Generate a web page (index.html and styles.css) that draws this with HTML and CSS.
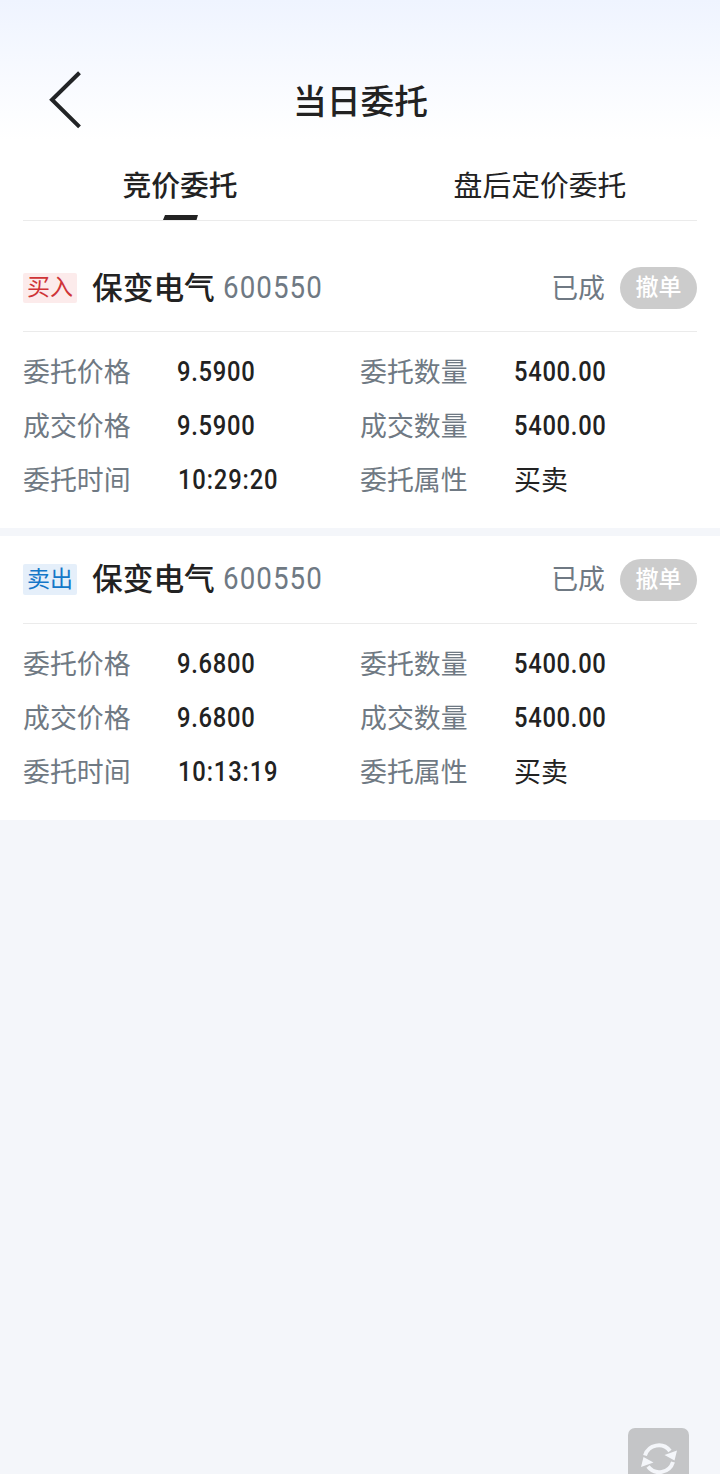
FILE: index.html
```html
<!DOCTYPE html>
<html lang="zh-CN">
<head>
<meta charset="utf-8">
<title>当日委托</title>
<link rel="stylesheet" href="styles.css">
</head>
<body>
<div class="screen">
  <header class="top">
    <div class="navbar">
      <svg class="back" width="36" height="60" viewBox="0 0 36 60"><path d="M32.5 2.8 5 29.7 32.5 56.8" fill="none" stroke="#222426" stroke-width="4"/></svg>
      <h1 class="title">当日委托</h1>
    </div>
    <nav class="tabs">
      <a class="tab tab-active">竞价委托<svg class="indicator" width="35" height="5" viewBox="0 0 35 5"><path d="M2 0H35L33.5 5H0Z" fill="#222"/></svg></a>
      <a class="tab">盘后定价委托</a>
    </nav>
  </header>
  <main class="orders">
    <section class="order">
      <div class="order-head">
        <span class="tag buy">买入</span><span class="name">保变电气</span><span class="code">600550</span>
        <span class="status">已成</span><button class="cancel">撤单</button>
      </div>
      <div class="details">
        <span class="label">委托价格</span><span class="num">9.5900</span><span class="label">委托数量</span><span class="num">5400.00</span>
        <span class="label">成交价格</span><span class="num">9.5900</span><span class="label">成交数量</span><span class="num">5400.00</span>
        <span class="label">委托时间</span><span class="num time">10:29:20</span><span class="label">委托属性</span><span class="kind">买卖</span>
      </div>
    </section>
    <section class="order">
      <div class="order-head">
        <span class="tag sell">卖出</span><span class="name">保变电气</span><span class="code">600550</span>
        <span class="status">已成</span><button class="cancel">撤单</button>
      </div>
      <div class="details">
        <span class="label">委托价格</span><span class="num">9.6800</span><span class="label">委托数量</span><span class="num">5400.00</span>
        <span class="label">成交价格</span><span class="num">9.6800</span><span class="label">成交数量</span><span class="num">5400.00</span>
        <span class="label">委托时间</span><span class="num time">10:13:19</span><span class="label">委托属性</span><span class="kind">买卖</span>
      </div>
    </section>
  </main>
  <button class="refresh">
    <svg width="38" height="38" viewBox="0 0 38 38"><g fill="none" stroke="#f4f6fa" stroke-width="4"><path d="M5 15.500A14.300 14.300 0 0 1 30 11"/><path d="M33 22A14.300 14.300 0 0 1 8 26.500"/></g><path d="M24.500 15 37 10.500 34.500 20.500ZM13.500 22.500 1 27 3.500 17Z" fill="#f4f6fa"/></svg>
  </button>
</div>
</body>
</html>
```

FILE: styles.css
```css
* { box-sizing: border-box; }
body {
  margin: 0;
  background: #f4f6fa;
  color: #222;
  font-family: "Noto Sans CJK SC", sans-serif;
}
.screen {
  position: relative;
  height: 1474px;
  overflow: hidden;
}
.top {
  height: 244px;
  padding: 62px 0 0;
  background: linear-gradient(#eff4ff 0, #fff 140px);
}
.navbar {
  display: grid;
  grid-template-columns: 120px 1fr 120px;
  align-items: center;
  height: 76px;
}
.back { margin-left: 47px; }
.title {
  margin: 0;
  padding-left: 1px;
  text-align: center;
  font-size: 33.8px;
  font-weight: 500;
  line-height: 76px;
}
.tabs {
  display: flex;
  height: 83px;
  background: linear-gradient(#ebebeb, #ebebeb) 23px 82px / 674px 1px no-repeat;
}
.tab {
  position: relative;
  flex: 1;
  padding-top: 21px;
  text-align: center;
  font-size: 28.8px;
  line-height: 50px;
}
.tab-active { font-weight: 500; }
.indicator {
  position: absolute;
  left: 163px;
  bottom: 1px;
}
.orders {
  display: flex;
  flex-direction: column;
  gap: 8px;
}
.order {
  height: 284px;
  padding: 0 23px;
  background: #fff;
}
.order-head {
  display: flex;
  align-items: center;
  height: 88px;
  border-bottom: 1px solid #ebebeb;
}
.tag {
  width: 54px;
  height: 30px;
  margin-top: 1px;
  border-radius: 2px;
  text-align: center;
  font-size: 23px;
  line-height: 25px;
}
.buy { color: #cf3437; background: #fcebeb; }
.sell {
  height: 31px;
  margin-top: 0;
  color: #1477c8;
  background: #e5effa;
  line-height: 27px;
}
.name {
  margin: -3px 0 0 15px;
  font-size: 30.7px;
  font-weight: 500;
  line-height: 44px;
}
.code {
  margin-left: 8px;
  color: #6f7983;
  font: 400 31.5px/44px Roboto, sans-serif;
  letter-spacing: 1.2px;
  transform: scaleX(.88);
  transform-origin: left;
}
.status {
  margin: -2px 0 0 auto;
  color: #6f7983;
  font-size: 26.9px;
}
.cancel {
  width: 77px;
  height: 42px;
  margin-left: 15px;
  padding: 0 0 5px;
  border: 0;
  border-radius: 21px;
  color: #fff;
  background: #ccc;
  font: 500 23px/37px "Noto Sans CJK SC", sans-serif;
}
.details {
  display: grid;
  grid-template-columns: 154px 183px 154px 1fr;
  grid-auto-rows: 54px;
  align-items: center;
  padding-top: 13px;
  font-size: 26.9px;
  line-height: 40px;
}
.label, .kind {
  color: #6f7983;
  margin-top: -2px;
}
.kind { color: #222; }
.num {
  font-family: Roboto, sans-serif;
  font-size: 27px;
  font-weight: 500;
  letter-spacing: .8px;
  transform: scaleX(.88);
  transform-origin: left;
}
.time { padding-left: 1px; letter-spacing: 1px; }
.order + .order .code { margin-top: -2px; }
.order + .order .name { margin-top: -5px; }
.order + .order .status { margin-top: -4px; }
.order + .order .details { grid-template-rows: 54px 54px 53px; }
.refresh {
  position: absolute;
  left: 628px;
  top: 1428px;
  display: flex;
  align-items: flex-start;
  width: 61px;
  height: 61px;
  padding: 12px 0 0 12px;
  border: 0;
  border-radius: 7px;
  background: #c4c5c7;
}
```
